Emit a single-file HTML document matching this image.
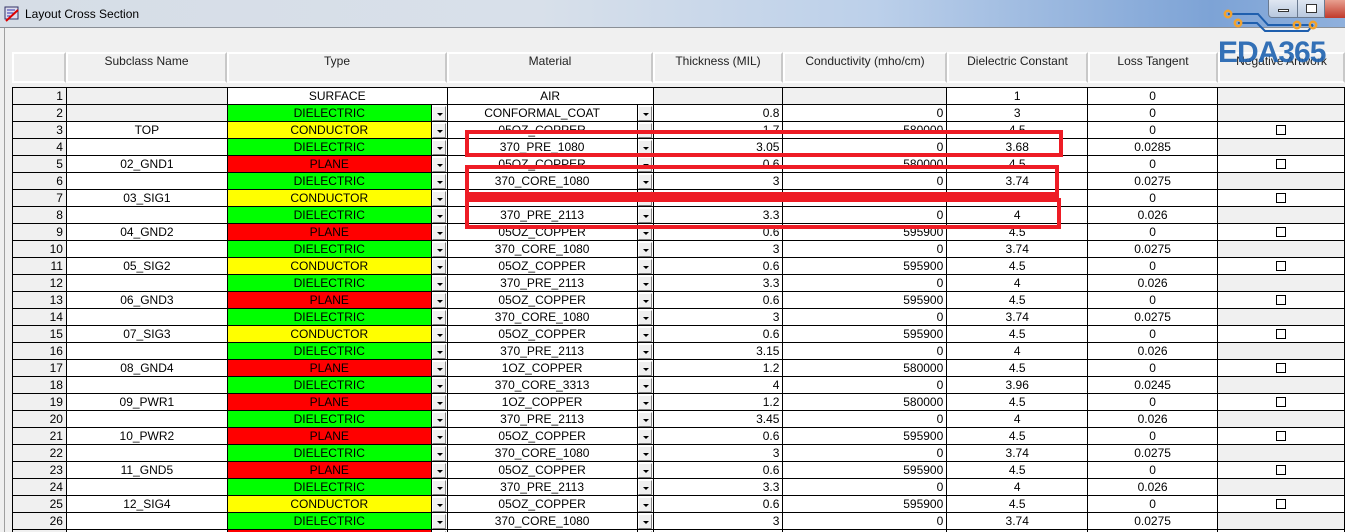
<!DOCTYPE html>
<html style="overflow:hidden;width:1345px;height:532px"><head><meta charset="utf-8"><style>
*{margin:0;padding:0;box-sizing:border-box}
body{width:1345px;height:532px;overflow:hidden;background:#f0f0f0;font-family:"Liberation Sans",Arial,sans-serif;font-size:12px;color:#000;position:relative}
#title{position:absolute;left:0;top:0;width:1345px;height:28px;background:linear-gradient(90deg,#d6dde6 0%,#d8e0ea 40%,#bcd0ea 65%,#7da3d6 90%,#8fb0dc 100%);border-bottom:1px solid #8a8f96}
#title span{position:absolute;left:25px;top:7px;font-size:12px}
#frame{position:absolute;left:4px;top:28px;width:1341px;height:504px;border-left:1px solid #a0a0a0;background:#f0f0f0}
.hd{position:absolute;top:52px;height:31px;background:#f0f0f0;border-left:2px solid #fff;border-top:2px solid #fff;border-right:2px solid #c8c8c8;border-bottom:2px solid #fff;text-align:center;padding-top:0px;color:#222;line-height:14px}
table{position:absolute;left:12px;top:87px;border-collapse:collapse;table-layout:fixed;background:#fff}
td{border:1px solid #000;height:17px;padding:0 2px;line-height:15px;text-align:center;white-space:nowrap;overflow:hidden;font-size:12px}
td.n{background:#f0f0f0;text-align:right;padding-right:3px}
td.r{text-align:right;padding-right:3px}
td.g{background:#f0f0f0}
td.D{background:#00ff00}td.C{background:#ffff00}td.P{background:#ff0000}
td.b{padding:0;background:#fff}
td.b i{display:block;width:14px;height:15px;margin:0 auto;background:#f0f0f0;border:1px solid;border-color:#fff #808080 #808080 #fff;position:relative}
td.b i:after{content:"";position:absolute;left:4px;top:6px;border-left:3px solid transparent;border-right:3px solid transparent;border-top:3px solid #000}
.cb{display:inline-block;width:10px;height:10px;border:1px solid #000;vertical-align:middle;background:#fff}
.box{position:absolute;border:4px solid #ee1c25}
</style></head><body>
<div id="title"><svg style="position:absolute;left:4px;top:6px" width="16" height="16"><rect x="1" y="1" width="13" height="12" fill="#dde" stroke="#336"/><path d="M3 4h8M3 7h8M3 10h5" stroke="#33a"/><path d="M2 15L14 4" stroke="#d00" stroke-width="2"/></svg><span>Layout Cross Section</span>
<div style="position:absolute;left:1268px;top:0;width:30px;height:18px;border:1px solid #6a7a90;border-top:none;background:linear-gradient(#dfe7f2,#b8c8de);border-radius:0 0 0 4px"><div style="position:absolute;left:9px;top:9px;width:11px;height:3px;border:1px solid #333;background:#fff"></div></div>
<div style="position:absolute;left:1297px;top:0;width:28px;height:18px;border:1px solid #6a7a90;border-top:none;background:linear-gradient(#dfe7f2,#b8c8de)"><div style="position:absolute;left:8px;top:4px;width:11px;height:9px;border:1px solid #333;background:#fff"></div></div>
<div style="position:absolute;left:1325px;top:0;width:20px;height:18px;background:linear-gradient(#e8a090,#c0392b)"></div>
</div>
<div id="frame"></div>
<div class="hd" style="left:12px;width:54px"></div>
<div class="hd" style="left:66px;width:161px">Subclass Name</div>
<div class="hd" style="left:227px;width:220px">Type</div>
<div class="hd" style="left:447px;width:206px">Material</div>
<div class="hd" style="left:653px;width:130px">Thickness (MIL)</div>
<div class="hd" style="left:783px;width:164px">Conductivity (mho/cm)</div>
<div class="hd" style="left:947px;width:141px">Dielectric Constant</div>
<div class="hd" style="left:1088px;width:130px">Loss Tangent</div>
<div class="hd" style="left:1218px;width:127px">Negative Artwork</div>
<table>
<colgroup><col style="width:54px"><col style="width:161px"><col style="width:204px"><col style="width:16px"><col style="width:190px"><col style="width:16px"><col style="width:130px"><col style="width:164px"><col style="width:141px"><col style="width:130px"><col style="width:127px"></colgroup>
<tr><td class="n">1</td><td class="g"></td><td colspan="2">SURFACE</td><td colspan="2">AIR</td><td class="g"></td><td class="g"></td><td>1</td><td>0</td><td class="g"></td></tr>
<tr><td class="n">2</td><td class="g"></td><td class="D">DIELECTRIC</td><td class="b"><i></i></td><td>CONFORMAL_COAT</td><td class="b"><i></i></td><td class="r">0.8</td><td class="r">0</td><td>3</td><td>0</td><td class="g"></td></tr>
<tr><td class="n">3</td><td>TOP</td><td class="C">CONDUCTOR</td><td class="b"><i></i></td><td>05OZ_COPPER</td><td class="b"><i></i></td><td class="r">1.7</td><td class="r">580000</td><td>4.5</td><td>0</td><td><span class="cb"></span></td></tr>
<tr><td class="n">4</td><td></td><td class="D">DIELECTRIC</td><td class="b"><i></i></td><td>370_PRE_1080</td><td class="b"><i></i></td><td class="r">3.05</td><td class="r">0</td><td>3.68</td><td>0.0285</td><td class="g"></td></tr>
<tr><td class="n">5</td><td>02_GND1</td><td class="P">PLANE</td><td class="b"><i></i></td><td>05OZ_COPPER</td><td class="b"><i></i></td><td class="r">0.6</td><td class="r">580000</td><td>4.5</td><td>0</td><td><span class="cb"></span></td></tr>
<tr><td class="n">6</td><td></td><td class="D">DIELECTRIC</td><td class="b"><i></i></td><td>370_CORE_1080</td><td class="b"><i></i></td><td class="r">3</td><td class="r">0</td><td>3.74</td><td>0.0275</td><td class="g"></td></tr>
<tr><td class="n">7</td><td>03_SIG1</td><td class="C">CONDUCTOR</td><td class="b"><i></i></td><td></td><td class="b"><i></i></td><td class="r"></td><td class="r"></td><td></td><td>0</td><td><span class="cb"></span></td></tr>
<tr><td class="n">8</td><td></td><td class="D">DIELECTRIC</td><td class="b"><i></i></td><td>370_PRE_2113</td><td class="b"><i></i></td><td class="r">3.3</td><td class="r">0</td><td>4</td><td>0.026</td><td class="g"></td></tr>
<tr><td class="n">9</td><td>04_GND2</td><td class="P">PLANE</td><td class="b"><i></i></td><td>05OZ_COPPER</td><td class="b"><i></i></td><td class="r">0.6</td><td class="r">595900</td><td>4.5</td><td>0</td><td><span class="cb"></span></td></tr>
<tr><td class="n">10</td><td></td><td class="D">DIELECTRIC</td><td class="b"><i></i></td><td>370_CORE_1080</td><td class="b"><i></i></td><td class="r">3</td><td class="r">0</td><td>3.74</td><td>0.0275</td><td class="g"></td></tr>
<tr><td class="n">11</td><td>05_SIG2</td><td class="C">CONDUCTOR</td><td class="b"><i></i></td><td>05OZ_COPPER</td><td class="b"><i></i></td><td class="r">0.6</td><td class="r">595900</td><td>4.5</td><td>0</td><td><span class="cb"></span></td></tr>
<tr><td class="n">12</td><td></td><td class="D">DIELECTRIC</td><td class="b"><i></i></td><td>370_PRE_2113</td><td class="b"><i></i></td><td class="r">3.3</td><td class="r">0</td><td>4</td><td>0.026</td><td class="g"></td></tr>
<tr><td class="n">13</td><td>06_GND3</td><td class="P">PLANE</td><td class="b"><i></i></td><td>05OZ_COPPER</td><td class="b"><i></i></td><td class="r">0.6</td><td class="r">595900</td><td>4.5</td><td>0</td><td><span class="cb"></span></td></tr>
<tr><td class="n">14</td><td></td><td class="D">DIELECTRIC</td><td class="b"><i></i></td><td>370_CORE_1080</td><td class="b"><i></i></td><td class="r">3</td><td class="r">0</td><td>3.74</td><td>0.0275</td><td class="g"></td></tr>
<tr><td class="n">15</td><td>07_SIG3</td><td class="C">CONDUCTOR</td><td class="b"><i></i></td><td>05OZ_COPPER</td><td class="b"><i></i></td><td class="r">0.6</td><td class="r">595900</td><td>4.5</td><td>0</td><td><span class="cb"></span></td></tr>
<tr><td class="n">16</td><td></td><td class="D">DIELECTRIC</td><td class="b"><i></i></td><td>370_PRE_2113</td><td class="b"><i></i></td><td class="r">3.15</td><td class="r">0</td><td>4</td><td>0.026</td><td class="g"></td></tr>
<tr><td class="n">17</td><td>08_GND4</td><td class="P">PLANE</td><td class="b"><i></i></td><td>1OZ_COPPER</td><td class="b"><i></i></td><td class="r">1.2</td><td class="r">580000</td><td>4.5</td><td>0</td><td><span class="cb"></span></td></tr>
<tr><td class="n">18</td><td></td><td class="D">DIELECTRIC</td><td class="b"><i></i></td><td>370_CORE_3313</td><td class="b"><i></i></td><td class="r">4</td><td class="r">0</td><td>3.96</td><td>0.0245</td><td class="g"></td></tr>
<tr><td class="n">19</td><td>09_PWR1</td><td class="P">PLANE</td><td class="b"><i></i></td><td>1OZ_COPPER</td><td class="b"><i></i></td><td class="r">1.2</td><td class="r">580000</td><td>4.5</td><td>0</td><td><span class="cb"></span></td></tr>
<tr><td class="n">20</td><td></td><td class="D">DIELECTRIC</td><td class="b"><i></i></td><td>370_PRE_2113</td><td class="b"><i></i></td><td class="r">3.45</td><td class="r">0</td><td>4</td><td>0.026</td><td class="g"></td></tr>
<tr><td class="n">21</td><td>10_PWR2</td><td class="P">PLANE</td><td class="b"><i></i></td><td>05OZ_COPPER</td><td class="b"><i></i></td><td class="r">0.6</td><td class="r">595900</td><td>4.5</td><td>0</td><td><span class="cb"></span></td></tr>
<tr><td class="n">22</td><td></td><td class="D">DIELECTRIC</td><td class="b"><i></i></td><td>370_CORE_1080</td><td class="b"><i></i></td><td class="r">3</td><td class="r">0</td><td>3.74</td><td>0.0275</td><td class="g"></td></tr>
<tr><td class="n">23</td><td>11_GND5</td><td class="P">PLANE</td><td class="b"><i></i></td><td>05OZ_COPPER</td><td class="b"><i></i></td><td class="r">0.6</td><td class="r">595900</td><td>4.5</td><td>0</td><td><span class="cb"></span></td></tr>
<tr><td class="n">24</td><td></td><td class="D">DIELECTRIC</td><td class="b"><i></i></td><td>370_PRE_2113</td><td class="b"><i></i></td><td class="r">3.3</td><td class="r">0</td><td>4</td><td>0.026</td><td class="g"></td></tr>
<tr><td class="n">25</td><td>12_SIG4</td><td class="C">CONDUCTOR</td><td class="b"><i></i></td><td>05OZ_COPPER</td><td class="b"><i></i></td><td class="r">0.6</td><td class="r">595900</td><td>4.5</td><td>0</td><td><span class="cb"></span></td></tr>
<tr><td class="n">26</td><td></td><td class="D">DIELECTRIC</td><td class="b"><i></i></td><td>370_CORE_1080</td><td class="b"><i></i></td><td class="r">3</td><td class="r">0</td><td>3.74</td><td>0.0275</td><td class="g"></td></tr>
<tr><td class="n">27</td><td></td><td class="P">PLANE</td><td class="b"><i></i></td><td>05OZ_COPPER</td><td class="b"><i></i></td><td class="r">0.6</td><td class="r">595900</td><td>4.5</td><td>0</td><td><span class="cb"></span></td></tr>
</table>
<div class="box" style="left:465px;top:130px;width:598px;height:27px"></div>
<div class="box" style="left:465px;top:165px;width:594px;height:34px;border-bottom-width:7px"></div>
<div class="box" style="left:465px;top:198px;width:596px;height:31px"></div>
<svg style="position:absolute;left:1220px;top:8px" width="125" height="28"><path d="M8 6H38L48 17H93" fill="none" stroke="#1f5fae" stroke-width="2"/><path d="M18 15H37L45 23H88L93 17" fill="none" stroke="#1f5fae" stroke-width="2"/><g fill="none" stroke="#f2a22c" stroke-width="2.5"><circle cx="8" cy="6" r="3.2"/><circle cx="18" cy="15" r="3.2"/><circle cx="77" cy="17" r="3.2"/><circle cx="93" cy="17" r="3.2"/></g></svg>
<div style="position:absolute;left:1218px;top:36px;font-size:30px;font-weight:bold;color:#1f63b0;opacity:.9;letter-spacing:-1px">EDA365</div>
</body></html>
